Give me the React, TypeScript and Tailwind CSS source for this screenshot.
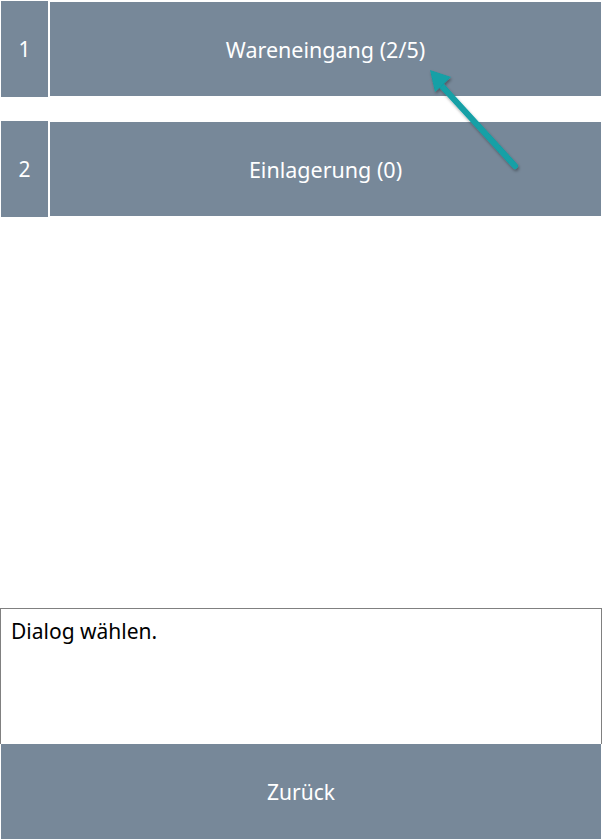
import React from "react";

const font = { fontFamily: '"Noto Sans", "Open Sans", sans-serif' };

function Row({ n, label }: { n: string; label: string }) {
  return (
    <div className="flex h-[96px] gap-[2px] pl-[1px] pr-[1px]">
      <div className="w-[47px] bg-[#778899] text-white text-[21px] flex items-center justify-center pt-[2px]">
        {n}
      </div>
      <div className="flex-1 my-[1px] bg-[#778899] text-white text-[21.5px] flex items-center justify-center pt-[2px]">
        {label}
      </div>
    </div>
  );
}

export default function App() {
  return (
    <div className="relative w-[602px] h-[840px] bg-white flex flex-col overflow-hidden" style={font}>
      <div className="pt-[1px]">
        <Row n="1" label="Wareneingang (2/5)" />
      </div>
      <div className="pt-[24px]">
        <Row n="2" label="Einlagerung (0)" />
      </div>
      <div className="flex-1" />
      <div className="h-[136px] border border-b-0 border-[#808080] px-[10px] pt-[8px] text-[21px] text-black leading-[28px]">
        Dialog wählen.
      </div>
      <div className="h-[95px] mx-[1px] mb-[1px] bg-[#778899] text-white text-[21px] flex items-center justify-center pt-[3px]">
        Zurück
      </div>
      <svg className="absolute left-0 top-0" width="602" height="840" viewBox="0 0 602 840">
        <defs>
          <filter id="sh" x="-20%" y="-20%" width="140%" height="140%">
            <feDropShadow dx="1" dy="2" stdDeviation="1.5" floodColor="#000" floodOpacity="0.35" />
          </filter>
        </defs>
        <g filter="url(#sh)">
          <line x1="515" y1="166" x2="440" y2="84" stroke="#12a0a6" strokeWidth="6" strokeLinecap="round" />
          <polygon points="430,70 451,77 435,92" fill="#12a0a6" />
        </g>
      </svg>
    </div>
  );
}
